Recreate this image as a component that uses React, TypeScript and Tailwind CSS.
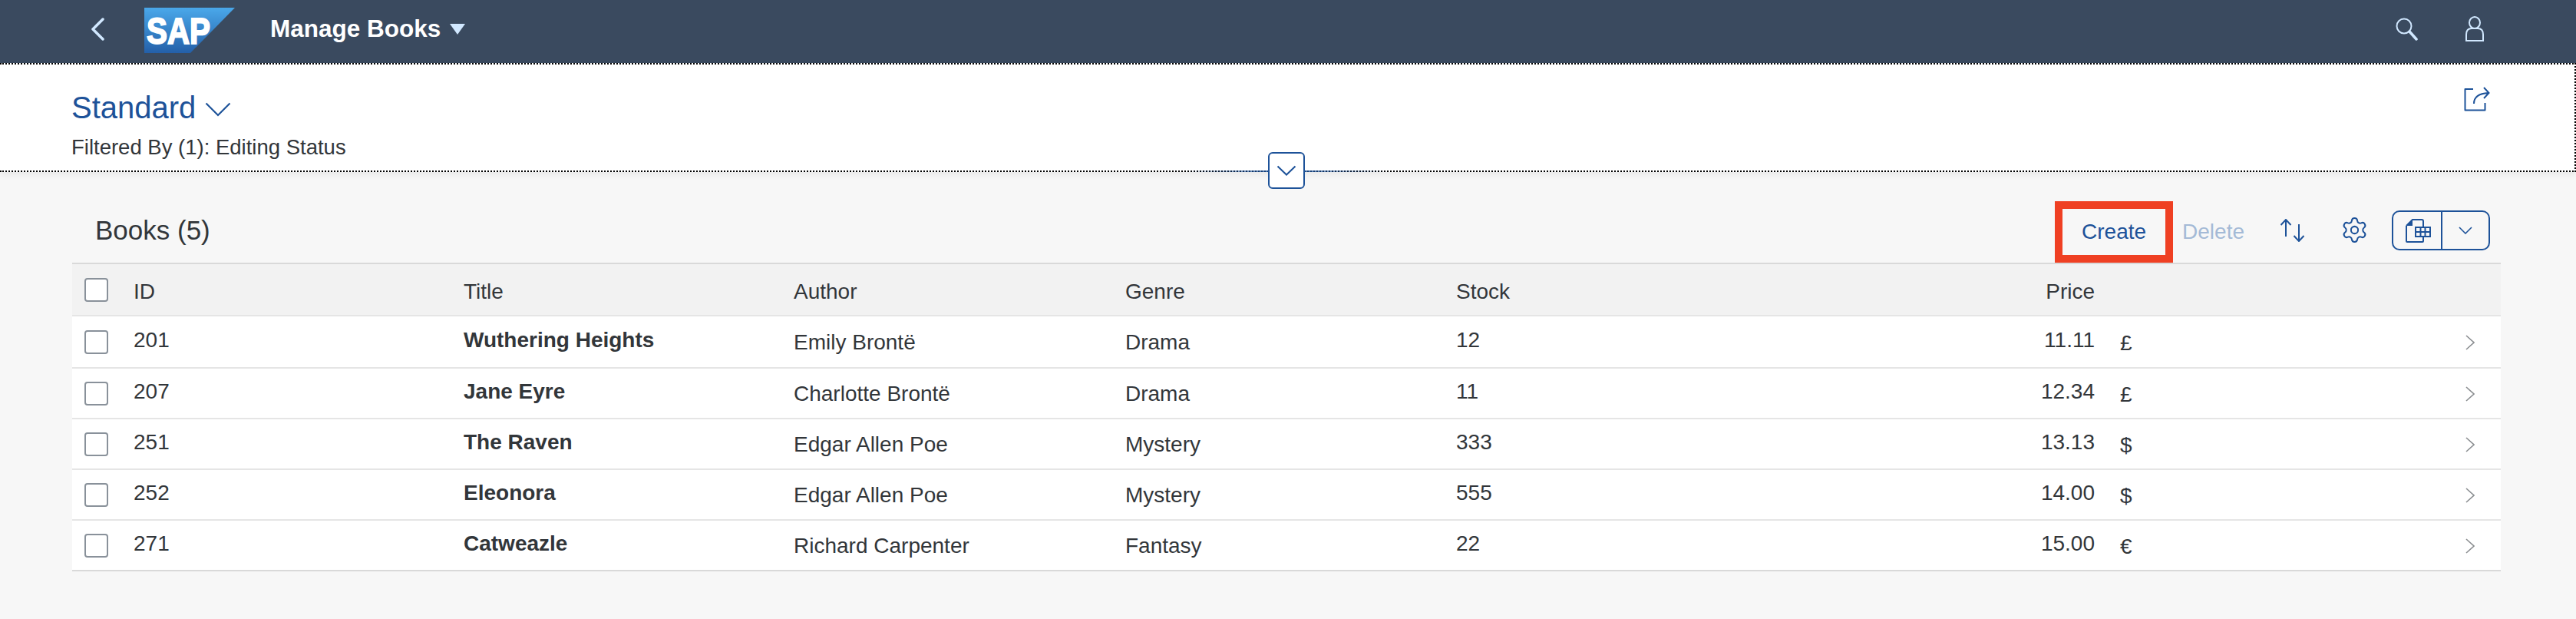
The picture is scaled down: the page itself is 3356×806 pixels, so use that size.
import React from 'react';
import { Settings } from 'lucide-react';

const books = [
  { id: '201', title: 'Wuthering Heights', author: 'Emily Brontë', genre: 'Drama', stock: '12', price: '11.11', currency: '£' },
  { id: '207', title: 'Jane Eyre', author: 'Charlotte Brontë', genre: 'Drama', stock: '11', price: '12.34', currency: '£' },
  { id: '251', title: 'The Raven', author: 'Edgar Allen Poe', genre: 'Mystery', stock: '333', price: '13.13', currency: '$' },
  { id: '252', title: 'Eleonora', author: 'Edgar Allen Poe', genre: 'Mystery', stock: '555', price: '14.00', currency: '$' },
  { id: '271', title: 'Catweazle', author: 'Richard Carpenter', genre: 'Fantasy', stock: '22', price: '15.00', currency: '€' },
];

const gridCols = 'grid grid-cols-[80px_430px_430px_432px_431px_431px_401px_33px_1fr]';

const Checkbox = () => (
  <div className="w-[31px] h-[31px] ml-[16px] bg-white border-2 border-[#89919a] rounded-[4px]" />
);

const SapLogo = () => (
  <svg width="118" height="59" viewBox="0 0 118 59">
    <defs>
      <linearGradient id="sapGrad" x1="0" y1="0" x2="0" y2="1">
        <stop offset="0" stopColor="#4aa8ea" />
        <stop offset="1" stopColor="#2460a9" />
      </linearGradient>
    </defs>
    <polygon points="0,0 118,0 60,59 0,59" fill="url(#sapGrad)" />
    <text x="3" y="47" fill="#fff" stroke="#fff" strokeWidth="2" fontSize="48" fontWeight="700" fontFamily="Liberation Sans, sans-serif" textLength="83" lengthAdjust="spacingAndGlyphs">SAP</text>
  </svg>
);

const App: React.FC = () => {
  return (
    <div className="w-[3356px] h-[806px] overflow-hidden flex flex-col bg-[#f7f7f7] text-[#32363a] font-['Liberation_Sans',sans-serif] text-[28px]">
      {/* shell bar */}
      <header className="h-[82px] shrink-0 bg-[#3a4a5f] flex items-center">
        <svg width="20" height="30" viewBox="0 0 20 30" className="ml-[118px] mb-[6px]">
          <path d="M16 2 L3 15 L16 28" fill="none" stroke="#d1e8ff" strokeWidth="3.5" strokeLinecap="round" strokeLinejoin="round" />
        </svg>
        <div className="ml-[50px] mb-[3px]"><SapLogo /></div>
        <div className="ml-[46px] mb-[6px] text-white font-bold text-[31.5px]">Manage Books</div>
        <svg width="20" height="14" viewBox="0 0 20 14" className="ml-[12px] mb-[6px]">
          <polygon points="0,0 20,0 10,14" fill="#d1e8ff" />
        </svg>
        <svg width="30" height="30" viewBox="0 0 30 30" className="ml-auto mb-[6px]">
          <circle cx="11" cy="11" r="9.5" fill="none" stroke="#d1e8ff" strokeWidth="2" />
          <path d="M18 18 L27 28" stroke="#d1e8ff" strokeWidth="3.5" strokeLinecap="round" />
        </svg>
        <svg width="26" height="34" viewBox="0 0 26 34" className="ml-[60px] mr-[119px] mb-[6px]">
          <ellipse cx="13" cy="8.5" rx="7" ry="7.5" fill="none" stroke="#d1e8ff" strokeWidth="2" />
          <path d="M2 32 L2 24 Q2 16 9 16 L17 16 Q24 16 24 24 L24 32 Z" fill="none" stroke="#d1e8ff" strokeWidth="2" />
        </svg>
      </header>

      {/* variant header */}
      <section className="relative h-[142px] shrink-0 bg-white border-y-2 border-r-2 border-dotted border-black shadow-[0_4px_8px_rgba(0,0,0,0.06)] pl-[93px] pr-[110px] flex justify-between">
        <div className="flex flex-col">
          <div className="flex items-center mt-[28px]">
            <span className="text-[#1d5299] text-[40px] leading-[56px]">Standard</span>
            <svg width="34" height="19" viewBox="0 0 34 19" className="ml-[12px] mt-[4px]">
              <path d="M1.5 1.5 L17 17 L32.5 1.5" fill="none" stroke="#1d5299" strokeWidth="2.2" />
            </svg>
          </div>
          <div className="mt-[6px] leading-[36px] text-[27.5px]">Filtered By (1): Editing Status</div>
        </div>
        <svg width="34" height="32" viewBox="0 0 34 32" className="mt-[29px]">
          <path d="M12 3 L1.5 3 L1.5 30.5 L27.5 30.5 L27.5 21" fill="none" stroke="#1d5299" strokeWidth="2" strokeLinejoin="round" />
          <path d="M13 22 Q13 9 32 8 M26 1 L32.5 8 L26 15" fill="none" stroke="#1d5299" strokeWidth="2" />
        </svg>
        {/* collapse button sits over the section edge */}
        <div className="absolute left-[1546px] right-[1548px] -bottom-[2px] h-[2px] bg-gradient-to-r from-transparent via-[#1d5299] to-transparent" />
        <button className="absolute left-[1652px] -bottom-[24px] w-[48px] h-[48px] bg-white border-2 border-[#1d5299] rounded-[6px] flex items-center justify-center">
          <svg width="26" height="14" viewBox="0 0 26 14">
            <path d="M1.5 1.5 L13 12.5 L24.5 1.5" fill="none" stroke="#1d5299" strokeWidth="2" />
          </svg>
        </button>
      </section>

      {/* toolbar */}
      <div className="h-[80px] shrink-0 mt-[38px] ml-[124px] mr-[112px] flex items-center">
        <div className="text-[35px] mb-[4px]">Books (5)</div>
        <div className="ml-auto flex items-center">
          <div className="w-[154px] h-[80px] border-[10px] border-[#ef4023] flex items-center justify-center text-[#1d5299]">Create</div>
          <div className="ml-[12px] text-[#a4bad6]">Delete</div>
          <svg width="32" height="30" viewBox="0 0 32 30" className="ml-[47px] mb-[4px]">
            <path d="M7 23 V1 M0.5 8 L7 1 L13.5 8" fill="none" stroke="#1d5299" strokeWidth="2" />
            <path d="M24 7 V29 M17.5 22 L24 29 L30.5 22" fill="none" stroke="#1d5299" strokeWidth="2" />
          </svg>
          <Settings size={37} strokeWidth={1.3} color="#1d5299" className="ml-[46px] mb-[5px]" />
          <div className="ml-[30px] w-[128px] h-[52px] mb-[4px] border-2 border-[#1d5299] rounded-[10px] flex items-center">
            <div className="w-[64px] h-full border-r-2 border-[#1d5299] flex items-center justify-center pl-[2px]">
              <svg width="33" height="31" viewBox="0 0 33 31">
                <path d="M1 9 L1 29 Q1 30 2 30 L22 30 Q23 30 23 29 L23 23 M1 9 L9 1 L21 1 Q23 1 23 3 L23 11" fill="none" stroke="#1d5299" strokeWidth="2" />
                <polygon points="1,9 9,1 9,9" fill="#1d5299" />
                <rect x="13" y="11" width="19" height="12" fill="none" stroke="#1d5299" strokeWidth="2" />
                <path d="M13 17 H32 M19.5 11 V23 M25.5 11 V23" stroke="#1d5299" strokeWidth="2" fill="none" />
              </svg>
            </div>
            <div className="flex-1 flex items-center justify-center">
              <svg width="18" height="10" viewBox="0 0 18 10">
                <path d="M1 1 L9 9 L17 1" fill="none" stroke="#1d5299" strokeWidth="1.6" />
              </svg>
            </div>
          </div>
        </div>
      </div>

      {/* table */}
      <div className="ml-[94px] w-[3164px] border-t-2 border-[#d9d9d9]">
        <div className={`${gridCols} h-[68px] bg-[#f2f2f2] border-b-2 border-[#e5e5e5] items-center`}>
          <Checkbox />
          <div className="pt-[6px]">ID</div>
          <div className="pt-[6px]">Title</div>
          <div className="pt-[6px]">Author</div>
          <div className="pt-[6px]">Genre</div>
          <div className="pt-[6px]">Stock</div>
          <div className="pt-[6px] text-right">Price</div>
        </div>
        {books.map((book, index) => (
          <div key={book.id} className={`${gridCols} ${index === 0 ? 'h-[68px]' : 'h-[66px]'} bg-white border-b-2 items-center ${index === books.length - 1 ? 'border-[#d9d9d9]' : 'border-[#e5e5e5]'}`}>
            <Checkbox />
            <div className="pb-[4px]">{book.id}</div>
            <div className="pb-[4px] font-bold">{book.title}</div>
            <div className="pt-[2px]">{book.author}</div>
            <div className="pt-[2px]">{book.genre}</div>
            <div className="pb-[4px]">{book.stock}</div>
            <div className="pb-[4px] text-right">{book.price}</div>
            <div />
            <div className="flex items-center justify-between pr-[34px]">
              <span className="pt-[4px]">{book.currency}</span>
              <svg width="12" height="20" viewBox="0 0 12 20" className="mt-[1px]">
                <path d="M1 1 L11 10 L1 19" fill="none" stroke="#8a8d90" strokeWidth="1.6" />
              </svg>
            </div>
          </div>
        ))}
      </div>
    </div>
  );
};

export default App;
